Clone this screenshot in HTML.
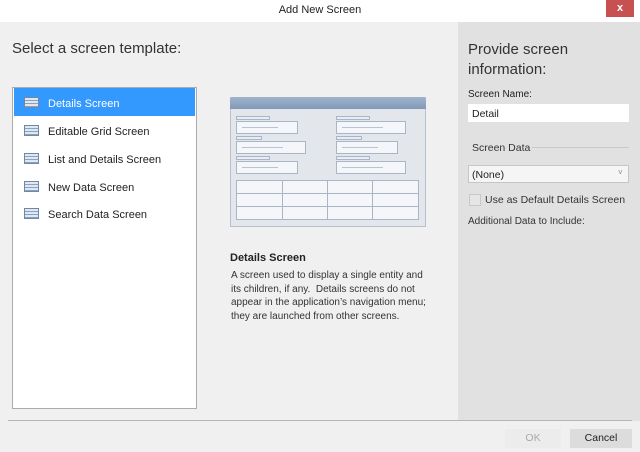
<html><head><style>
body{margin:0;width:640px;height:452px;overflow:hidden;font-family:"Liberation Sans",sans-serif;background:#f0f0f0;position:relative}
div{position:absolute;box-sizing:border-box}
.t{font-size:11px;color:#222;white-space:nowrap}
.lb{background:#e8edf3;border:1px solid #a9b6c8;height:4px}
.bx{background:#f4f6f9;border:1px solid #a9b6c8;height:13px}
.bx:after{content:"";position:absolute;left:5px;top:5px;width:60%;height:1px;background:#b8c4d4}
.li{height:28px;left:14px;width:181px}
.li .ic{left:10px;top:9px;width:15px;height:11px;border:1px solid #6d88a8;background:repeating-linear-gradient(#dfe7f1 0 2px,#8aa2c0 2px 3px)}
.li .t{left:34px;top:10px}
</style></head><body>
<div style="left:0;top:0;width:640px;height:22px;background:#fff"></div>
<div class="t" style="left:0;width:640px;top:4px;text-align:center;font-size:11px">Add New Screen</div>
<div style="left:606px;top:0;width:28px;height:17px;background:#c75050;color:#fff;font-size:11px;text-align:center;line-height:16px;font-weight:bold">x</div>
<div style="left:458px;top:22px;width:182px;height:399px;background:#e1e1e1"></div>
<div class="t" style="left:12px;top:40px;font-size:15px;color:#333">Select a screen template:</div>
<div class="t" style="left:468px;top:40px;font-size:15px;color:#333;line-height:20px">Provide screen<br>information:</div>
<div style="left:12px;top:87px;width:185px;height:322px;background:#fff;border:1px solid #ababab"></div>
<div class="li" style="top:88px;background:#3399ff"><div class="ic"></div><div class="t" style="color:#fff">Details Screen</div></div>
<div class="li" style="top:116px"><div class="ic"></div><div class="t">Editable Grid Screen</div></div>
<div class="li" style="top:144px"><div class="ic"></div><div class="t">List and Details Screen</div></div>
<div class="li" style="top:172px"><div class="ic"></div><div class="t">New Data Screen</div></div>
<div class="li" style="top:199px"><div class="ic"></div><div class="t">Search Data Screen</div></div>

<div style="left:230px;top:97px;width:196px;height:130px;background:#e3e6ea;border:1px solid #b7c0cc"></div>
<div style="left:230px;top:97px;width:196px;height:12px;background:linear-gradient(#9fb3cb,#8199b8);border-radius:3px 3px 0 0"></div>
<div class="lb" style="left:236px;top:116px;width:34px"></div><div class="bx" style="left:236px;top:121px;width:62px"></div>
<div class="lb" style="left:336px;top:116px;width:34px"></div><div class="bx" style="left:336px;top:121px;width:70px"></div>
<div class="lb" style="left:236px;top:136px;width:26px"></div><div class="bx" style="left:236px;top:141px;width:70px"></div>
<div class="lb" style="left:336px;top:136px;width:26px"></div><div class="bx" style="left:336px;top:141px;width:62px"></div>
<div class="lb" style="left:236px;top:156px;width:34px"></div><div class="bx" style="left:236px;top:161px;width:62px"></div>
<div class="lb" style="left:336px;top:156px;width:34px"></div><div class="bx" style="left:336px;top:161px;width:70px"></div>
<div style="left:236px;top:180px;width:183px;height:40px;background:#f4f6f9;border:1px solid #a9b6c8;background-image:linear-gradient(90deg,transparent 45px,#a9b6c8 45px,#a9b6c8 46px,transparent 46px,transparent 90px,#a9b6c8 90px,#a9b6c8 91px,transparent 91px,transparent 135px,#a9b6c8 135px,#a9b6c8 136px,transparent 136px),linear-gradient(transparent 12px,#a9b6c8 12px,#a9b6c8 13px,transparent 13px,transparent 25px,#a9b6c8 25px,#a9b6c8 26px,transparent 26px)"></div>

<div class="t" style="left:230px;top:252px;font-weight:bold">Details Screen</div>
<div class="t" style="left:231px;top:269px;line-height:13.5px;width:210px;font-size:10px;color:#333">A screen used to display a single entity and<br>its children, if any.&nbsp; Details screens do not<br>appear in the application’s navigation menu;<br>they are launched from other screens.</div>

<div class="t" style="left:468px;top:89px;font-size:10px">Screen Name:</div>
<div style="left:468px;top:104px;width:161px;height:18px;background:#fff"></div>
<div class="t" style="left:472px;top:108px;font-size:10.5px">Detail</div>
<div class="t" style="left:472px;top:142px;font-size:10.5px;color:#333">Screen Data</div>
<div style="left:532px;top:147px;width:97px;height:1px;background:#c8c8c8"></div>
<div style="left:468px;top:165px;width:161px;height:18px;background:#f5f5f5;border:1px solid #c6c6c6"></div>
<div class="t" style="left:472px;top:169px;font-size:10.5px">(None)</div>
<div class="t" style="left:618px;top:168px;font-size:8px;color:#888">˅</div>
<div style="left:469px;top:194px;width:12px;height:12px;border:1px solid #c8c8c8;background:#e5e5e5"></div>
<div class="t" style="left:485px;top:194px;font-size:10.5px;color:#333">Use as Default Details Screen</div>
<div class="t" style="left:468px;top:216px;font-size:10px;color:#333">Additional Data to Include:</div>

<div style="left:8px;top:420px;width:624px;height:1px;background:#b5b5b5"></div>
<div style="left:505px;top:429px;width:56px;height:19px;background:#ececec"></div>
<div class="t" style="left:505px;top:432px;width:56px;text-align:center;font-size:10.5px;color:#aaa">OK</div>
<div style="left:570px;top:429px;width:62px;height:19px;background:#dcdcdc"></div>
<div class="t" style="left:570px;top:432px;width:62px;text-align:center;font-size:10.5px">Cancel</div>
</body></html>
